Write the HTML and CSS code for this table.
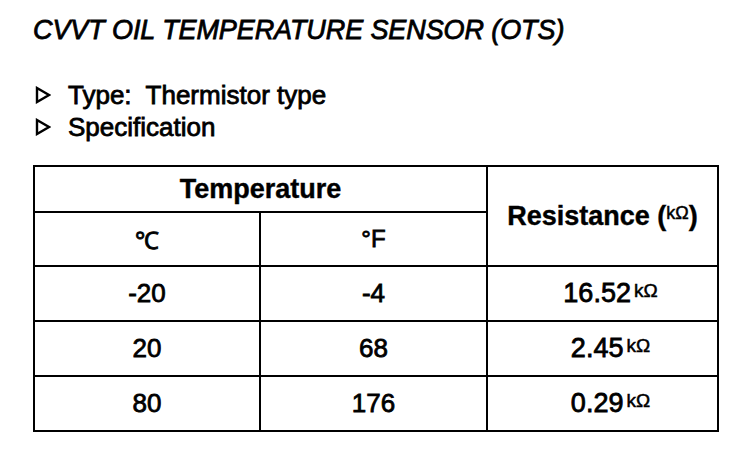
FILE: index.html
```html
<!DOCTYPE html>
<html lang="en">
<head>
  <meta charset="UTF-8">
  <title>CVVT Oil Temperature Sensor</title>
  <link rel="stylesheet" href="styles.css">
</head>
<body>
  <div class="page">
    <h1 class="title">CVVT OIL TEMPERATURE SENSOR (OTS)</h1>

    <ul class="specs">
      <li>
        <svg class="tri" width="16" height="18" viewBox="0 0 16 18"><polygon points="2,2 14,9 2,16" fill="none" stroke="#000" stroke-width="2.4" stroke-linejoin="miter"/></svg>
        Type:&nbsp; Thermistor type
      </li>
      <li>
        <svg class="tri" width="16" height="18" viewBox="0 0 16 18"><polygon points="2,2 14,9 2,16" fill="none" stroke="#000" stroke-width="2.4" stroke-linejoin="miter"/></svg>
        Specification
      </li>
    </ul>

    <table class="spec-table">
      <colgroup>
        <col class="c1">
        <col class="c2">
        <col class="c3">
      </colgroup>
      <tr class="head1">
        <th colspan="2">Temperature</th>
        <th rowspan="2" class="res">Resistance (<span class="unit">kΩ</span>)</th>
      </tr>
      <tr class="head2">
        <td>℃</td>
        <td>°F</td>
      </tr>
      <tr>
        <td>-20</td>
        <td>-4</td>
        <td class="val">16.52<span class="unit">kΩ</span></td>
      </tr>
      <tr>
        <td>20</td>
        <td>68</td>
        <td class="val">2.45<span class="unit">kΩ</span></td>
      </tr>
      <tr>
        <td>80</td>
        <td>176</td>
        <td class="val">0.29<span class="unit">kΩ</span></td>
      </tr>
    </table>
  </div>
</body>
</html>
```

FILE: styles.css
```css
body {
  margin: 0;
  padding: 0;
  background: #fff;
  color: #000;
  font-family: "Liberation Sans", Arial, sans-serif;
}
.page {
  padding: 14px 0 0 33px;
}
.title {
  margin: 0;
  font-size: 27px;
  font-style: italic;
  font-weight: normal;
  letter-spacing: -0.1px;
  -webkit-text-stroke: 0.8px #000;
  line-height: 32px;
}
.specs {
  list-style: none;
  margin: 33px 0 0 0;
  padding: 0;
  font-size: 26px;
  line-height: 32px;
  -webkit-text-stroke: 0.8px #000;
}
.specs li {
  display: flex;
  align-items: center;
}
.tri {
  margin: 0 17px 0 2px;
}
.spec-table {
  margin-top: 22px;
  border-collapse: collapse;
  border: 2px solid #000;
  font-size: 26px;
  -webkit-text-stroke: 0.8px #000;
}
.c1 { width: 226px; }
.c2 { width: 227px; }
.c3 { width: 231px; }
.spec-table th,
.spec-table td {
  border: 2px solid #000;
  text-align: center;
  padding: 0;
}
.spec-table th {
  font-weight: bold;
  font-size: 27px;
  -webkit-text-stroke: 0.4px #000;
}
.head1 th { height: 44px; }
.spec-table tr td { height: 53px; }
.spec-table .head2 td { height: 52px; font-size: 24px; }
.spec-table .val {
  font-size: 27px;
  padding-left: 16px;
}
.res {
  padding-left: 12px;
  padding-bottom: 2px;
}
.unit {
  font-size: 19px;
  margin-left: 3px;
  vertical-align: 5px;
  font-weight: normal;
  -webkit-text-stroke: 0.5px #000;
}
.res .unit {
  margin-left: 0;
  font-size: 18px;
  vertical-align: 6px;
}
```
